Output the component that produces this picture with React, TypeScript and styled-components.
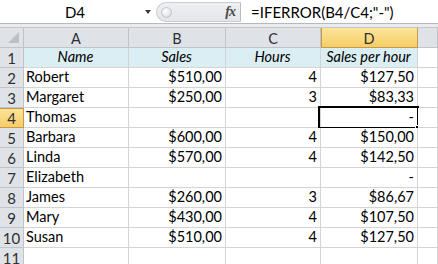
import React from 'react'
import styled, { createGlobalStyle } from 'styled-components'

type Row = {
	name: string
	sales: string
	hours: string
	rate: string
}

const rows: Row[] = [
	{ name: 'Robert', sales: '$510,00', hours: '4', rate: '$127,50' },
	{ name: 'Margaret', sales: '$250,00', hours: '3', rate: '$83,33' },
	{ name: 'Thomas', sales: '', hours: '', rate: '-' },
	{ name: 'Barbara', sales: '$600,00', hours: '4', rate: '$150,00' },
	{ name: 'Linda', sales: '$570,00', hours: '4', rate: '$142,50' },
	{ name: 'Elizabeth', sales: '', hours: '', rate: '-' },
	{ name: 'James', sales: '$260,00', hours: '3', rate: '$86,67' },
	{ name: 'Mary', sales: '$430,00', hours: '4', rate: '$107,50' },
	{ name: 'Susan', sales: '$510,00', hours: '4', rate: '$127,50' },
]

const columns = ['A', 'B', 'C', 'D']
const activeCol = 'D'
const activeRow = 4

const GlobalStyle = createGlobalStyle`
	html, body {
		margin: 0;
		padding: 0;
		background: #ffffff;
		overflow: hidden;
	}
	* {
		box-sizing: border-box;
	}
`

export default function App(): JSX.Element {
	return (
		<Window>
			<GlobalStyle />
			<FormulaBar>
				<NameBox>
					<NameText>D4</NameText>
					<DropArrow />
				</NameBox>
				<FxArea>
					<Knob />
					<Fx>fx</Fx>
				</FxArea>
				<FormulaInput>=IFERROR(B4/C4;"-")</FormulaInput>
			</FormulaBar>
			<Band />
			<Sheet>
				<Corner>
					<CornerTriangle />
				</Corner>
				{columns.map((c) => (
					<ColHeader key={c} active={c === activeCol}>
						{c}
					</ColHeader>
				))}
				<ColHeader active={false} />

				<RowHeader active={false}>1</RowHeader>
				<Cell fill align="center" italic>
					Name
				</Cell>
				<Cell fill align="center" italic>
					Sales
				</Cell>
				<Cell fill align="center" italic>
					Hours
				</Cell>
				<Cell fill align="center" italic>
					Sales per hour
				</Cell>
				<Cell />

				{rows.map((r, i) => {
					const n = i + 2
					return (
						<React.Fragment key={n}>
							<RowHeader active={n === activeRow}>{n}</RowHeader>
							<Cell>{r.name}</Cell>
							<Cell align="right">{r.sales}</Cell>
							<Cell align="right">{r.hours}</Cell>
							<Cell align="right">
								{r.rate}
								{n === activeRow && (
									<Selection>
										<Handle />
									</Selection>
								)}
							</Cell>
							<Cell />
						</React.Fragment>
					)
				})}

				<RowHeader active={false}>11</RowHeader>
				<Cell />
				<Cell />
				<Cell />
				<Cell />
				<Cell />
			</Sheet>
		</Window>
	)
}

const Window = styled.div`
	width: 438px;
	height: 264px;
	overflow: hidden;
	background: #ffffff;
	font-family: Lato, 'Liberation Sans', sans-serif;
	font-size: 14.5px;
	color: #000000;
`

const FormulaBar = styled.div`
	height: 24px;
	display: flex;
	background: #ffffff;
	border-bottom: 1px solid #b6babf;
`

const NameBox = styled.div`
	width: 156px;
	display: flex;
	align-items: center;
	position: relative;
`

const NameText = styled.span`
	flex: 1;
	text-align: center;
	padding-left: 5px;
	padding-top: 1px;
	font-size: 15px;
`

const DropArrow = styled.span`
	width: 0;
	height: 0;
	margin-right: 5px;
	border-left: 3.5px solid transparent;
	border-right: 3.5px solid transparent;
	border-top: 4px solid #3a3a3a;
`

const FxArea = styled.div`
	width: 85px;
	margin: 2px 0 1px;
	display: flex;
	align-items: center;
	justify-content: space-between;
	background: linear-gradient(#eef0f3, #e2e5ea);
	border: 1px solid #c9ccd1;
	border-right: 1px solid #b9bdc3;
	border-radius: 10px 0 0 10px;
	padding: 0 3px 0 4px;
`

const Knob = styled.span`
	width: 11px;
	height: 11px;
	border-radius: 50%;
	background: radial-gradient(circle at 40% 35%, #ffffff 0%, #e6e8eb 55%, #c9ccd0 100%);
	border: 1px solid #c3c6ca;
`

const Fx = styled.span`
	font-family: 'Liberation Serif', serif;
	font-style: italic;
	font-weight: bold;
	font-size: 14px;
	color: #4a4a4a;
	letter-spacing: -1px;
	padding-right: 2px;
`

const FormulaInput = styled.div`
	flex: 1;
	display: flex;
	align-items: center;
	padding-left: 10px;
	padding-top: 1px;
	font-size: 15px;
	white-space: nowrap;
`

const Band = styled.div`
	height: 3px;
	background: #e9ebee;
`

const Sheet = styled.div`
	display: grid;
	grid-template-columns: 24px 105px 97px 95px 97px 1fr;
	grid-auto-rows: 20px;
	border-top: 1px solid #c3c7cc;
`

const HeaderBase = styled.div`
	display: flex;
	align-items: center;
	justify-content: center;
	border-right: 1px solid #c0c4c9;
	border-bottom: 1px solid #c0c4c9;
	color: #303030;
	padding-top: 1px;
`

const Corner = styled(HeaderBase)`
	position: relative;
	background: #dfe3e8;
`

const CornerTriangle = styled.span`
	position: absolute;
	right: 4px;
	bottom: 4px;
	width: 0;
	height: 0;
	border-left: 11px solid transparent;
	border-bottom: 11px solid #bcc1c7;
`

const ColHeader = styled(HeaderBase)<{ active: boolean }>`
	background: ${({ active }) => (active ? 'linear-gradient(#fde59c, #f6cd66)' : '#dfe3e8')};
	border-right-color: ${({ active }) => (active ? '#c59b4a' : '#c0c4c9')};
	border-bottom-color: ${({ active }) => (active ? '#c59b4a' : '#c0c4c9')};
	box-shadow: ${({ active }) => (active ? 'inset 1px 0 0 #c59b4a' : 'none')};
`

const RowHeader = styled(HeaderBase)<{ active: boolean }>`
	background: ${({ active }) => (active ? 'linear-gradient(#fde59c, #f6cd66)' : '#dfe3e8')};
	border-right-color: ${({ active }) => (active ? '#c59b4a' : '#c0c4c9')};
	border-bottom-color: ${({ active }) => (active ? '#c59b4a' : '#c0c4c9')};
	box-shadow: ${({ active }) => (active ? 'inset 0 1px 0 #c59b4a' : 'none')};
	font-size: 15px;
`

const Cell = styled.div<{ align?: 'left' | 'center' | 'right'; fill?: boolean; italic?: boolean }>`
	position: relative;
	display: flex;
	align-items: flex-end;
	justify-content: ${({ align }) =>
		align === 'right' ? 'flex-end' : align === 'center' ? 'center' : 'flex-start'};
	padding: 0 3px 1px 2px;
	border-right: 1px solid #d4d4d4;
	border-bottom: 1px solid #d4d4d4;
	background: ${({ fill }) => (fill ? '#daeef3' : '#ffffff')};
	font-style: ${({ italic }) => (italic ? 'italic' : 'normal')};
	white-space: nowrap;
	line-height: 18px;
`

const Selection = styled.span`
	position: absolute;
	left: -3px;
	top: -2px;
	right: -2px;
	bottom: -2px;
	border: 2px solid #000000;
	pointer-events: none;
`

const Handle = styled.span`
	position: absolute;
	right: -4px;
	bottom: -4px;
	width: 6px;
	height: 6px;
	background: #000000;
	border: 1px solid #ffffff;
`
